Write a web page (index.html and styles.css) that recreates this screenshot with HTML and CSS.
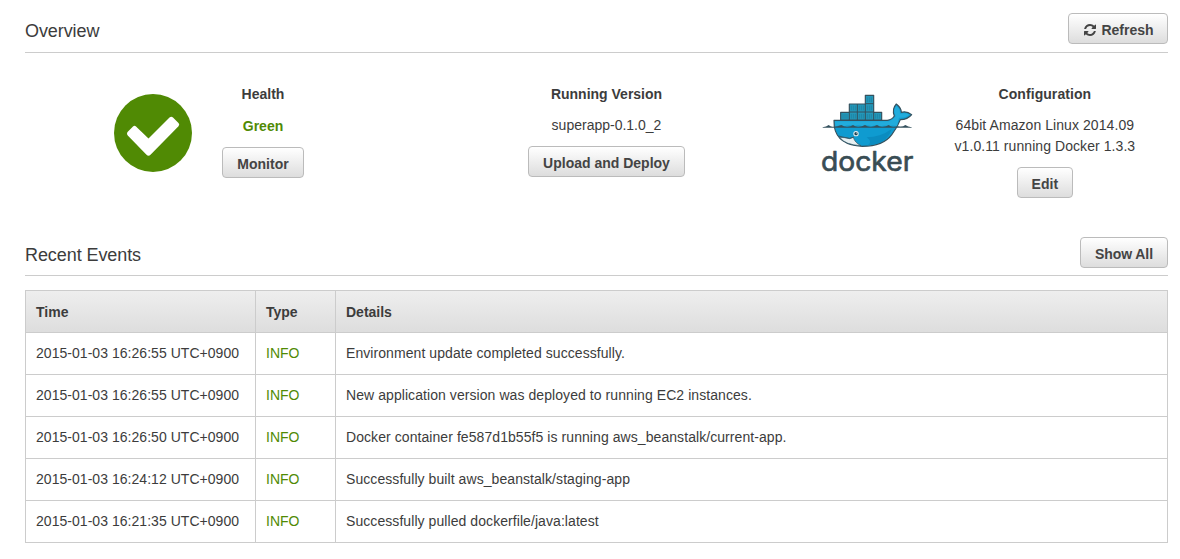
FILE: index.html
```html
<!DOCTYPE html>
<html lang="en">
<head>
<meta charset="utf-8">
<title>Environment Overview</title>
<link rel="stylesheet" href="styles.css">
</head>
<body>
<main class="page">
  <header class="section-head">
    <h2>Overview</h2>
    <button class="btn refresh" type="button"><svg class="sync" viewBox="0 0 1536 1536" aria-hidden="true"><path d="M1511 928q0 5-1 7-64 268-268 434.500T764 1536q-146 0-282.500-55T238 1324l-129 129q-19 19-45 19t-45-19-19-45V960q0-26 19-45t45-19h448q26 0 45 19t19 45-19 45l-137 137q71 66 161 102t187 36q134 0 250-65t186-179q11-17 53-117 8-23 30-23h192q13 0 22.500 9.500t9.500 22.500zM1536 128v448q0 26-19 45t-45 19h-448q-26 0-45-19t-19-45 19-45l138-138Q969 256 768 256q-134 0-250 65T332 500q-11 17-53 117-8 23-30 23H50q-13 0-22.500-9.500T18 608v-7q65-268 270-434.500T768 0q146 0 284 55.500T1297 212l130-129q19-19 45-19t45 19 19 45z"/></svg>Refresh</button>
  </header>

  <section class="summary">
    <div class="cell health">
      <svg class="check" viewBox="0 0 78 78" aria-hidden="true"><circle cx="39" cy="39" r="39"/><path d="M14 37.500L19 32.500Q20.500 31 22 32.500L34.500 44.500L55.500 23.500Q57.300 22 59 23.500L64.500 29Q66 30.500 64.500 32.200L36.500 60.800Q34.500 62.500 32.500 60.800L14 41.800Q12 39.500 14 37.500Z"/></svg>
      <div class="info">
        <h3>Health</h3>
        <p class="status">Green</p>
        <button class="btn" type="button">Monitor</button>
      </div>
    </div>
    <div class="cell version">
      <div class="info">
        <h3>Running Version</h3>
        <p>superapp-0.1.0_2</p>
        <button class="btn" type="button">Upload and Deploy</button>
      </div>
    </div>
    <div class="cell config">
      <svg class="docker" viewBox="30 21 285 249" role="img" aria-label="Docker">
        <g stroke="#34515e" stroke-width="3.500" stroke-linejoin="round">
          <path fill="#0f9bd0" d="M72 106H232Q247 104 253 93Q245 72 259 57Q274 69 274 82Q290 77 305 89Q293 104 271 104Q262 128 246 148Q220 184 157 184Q83 181 73 126Z"/>
          <path fill="#22acdc" stroke="none" d="M75 109H237Q250 104 257 94Q248 74 259 63Q271 71 270 86Q287 82 298 89Q287 99 267 98L261 123Q245 119 238 124Q225 119 211 124Q198 118 185 124Q171 118 158 124Q144 118 132 124Q118 118 103 124Q90 119 76 124Z"/>
          <path fill="#0b8cc0" stroke="none" d="M170 157Q211 157 245 132Q231 178 171 182Q190 172 170 157Z"/>
          <path fill="#e8f0f2" stroke-width="2" d="M89 157Q103 157 119 161L130 157Q134 173 153 182Q106 180 89 157Z"/>
          <path fill="none" stroke-width="2.500" d="M86 153Q101 157 119 160L132 156"/>
          <path fill="#2398ba" d="M92 82H118V57H166V31H191V82H215V105H92Z"/>
          <path fill="none" stroke-width="3" d="M118 81H191M118 82V105M142 57V105M166 57V105M191 82V105M166 56H191"/>
        </g>
        <path class="slats" d="M99 87V101M105 87V101M111 87V101M124 87V101M130 87V101M136 87V101M148 87V101M154 87V101M160 87V101M172 87V101M178 87V101M184 87V101M197 87V101M203 87V101M209 87V101M124 62V76M130 62V76M136 62V76M148 62V76M154 62V76M160 62V76M172 62V76M178 62V76M184 62V76M172 37V51M178 37V51M184 37V51"/>
        <path class="waves" d="M38 127Q49 126 56 120Q62 126 70 125Q82 125 94 120Q103 126 113 125Q122 125 129 120Q137 126 146 125Q156 125 165 120Q173 126 183 125Q193 125 201 120Q209 126 218 125Q229 125 236 120Q243 126 251 125Q260 125 266 124Q278 126 286 120Q294 126 305 127V128H38Z"/>
        <circle cx="138" cy="146" r="8" fill="#e6eef1"/><circle cx="138" cy="146" r="5" fill="#244754"/><circle cx="140" cy="144" r="1.500" fill="#fff"/>
        <text class="wordmark" x="33" y="259" textLength="277" lengthAdjust="spacingAndGlyphs">docker</text>
      </svg>
      <div class="info">
        <h3>Configuration</h3>
        <p>64bit Amazon Linux 2014.09<br>v1.0.11 running Docker 1.3.3</p>
        <button class="btn" type="button">Edit</button>
      </div>
    </div>
  </section>

  <header class="section-head events-head">
    <h2>Recent Events</h2>
    <button class="btn show-all" type="button">Show All</button>
  </header>

  <table class="events">
    <colgroup><col class="col-time"><col class="col-type"><col></colgroup>
    <thead><tr><th>Time</th><th>Type</th><th>Details</th></tr></thead>
    <tbody>
      <tr><td>2015-01-03 16:26:55 UTC+0900</td><td class="level">INFO</td><td>Environment update completed successfully.</td></tr>
      <tr><td>2015-01-03 16:26:55 UTC+0900</td><td class="level">INFO</td><td>New application version was deployed to running EC2 instances.</td></tr>
      <tr><td>2015-01-03 16:26:50 UTC+0900</td><td class="level">INFO</td><td>Docker container fe587d1b55f5 is running aws_beanstalk/current-app.</td></tr>
      <tr><td>2015-01-03 16:24:12 UTC+0900</td><td class="level">INFO</td><td>Successfully built aws_beanstalk/staging-app</td></tr>
      <tr><td>2015-01-03 16:21:35 UTC+0900</td><td class="level">INFO</td><td>Successfully pulled dockerfile/java:latest</td></tr>
    </tbody>
  </table>
</main>
</body>
</html>
```
FILE: styles.css
```css
* { box-sizing: border-box; }
body {
  margin: 0;
  background: #fff;
  color: #3c3c3c;
  font: 14px/21px "Liberation Sans", Arial, sans-serif;
}
h2, h3, p { margin: 0; }
.page { width: 1143px; margin-left: 25px; padding-top: 13px; }

.section-head {
  display: flex;
  justify-content: space-between;
  align-items: flex-start;
  height: 40px;
  border-bottom: 1px solid #ccc;
}
.section-head h2 { padding-top: 6px; font-size: 18px; line-height: 24px; font-weight: 400; letter-spacing: -0.08px; }
.events-head { height: 39px; }

.btn {
  height: 31px;
  padding: 2px 14px 0;
  border: 1px solid #bbb;
  border-radius: 4px;
  background: linear-gradient(#fff, #ddd);
  color: #444;
  font: bold 14px/20px "Liberation Sans", Arial, sans-serif;
  white-space: nowrap;
}
.refresh { width: 100px; padding-left: 15px; padding-right: 13px; }
.show-all { width: 88px; padding-left: 13px; padding-right: 13px; letter-spacing: -0.08px; }
.sync { width: 12px; height: 12px; margin-right: 5px; vertical-align: -1px; fill: #444; }

.summary { display: grid; grid-template-columns: repeat(3, 381px); height: 184px; padding-top: 31px; }
.cell { display: flex; align-items: flex-start; }
.info { text-align: center; }
.info h3 { margin-bottom: 10px; font-size: 14px; line-height: 21px; }
.info p { margin-bottom: 10px; }
.info .status { padding-top: 1px; color: #508a04; font-weight: bold; }
.health { padding-left: 88.5px; }
.health .info { margin-left: 30.5px; }
.health .btn { width: 82px; }
.check { width: 78px; height: 78px; margin-top: 10px; fill: #508a04; }
.check path { fill: #fff; }
.version { justify-content: center; padding-left: 20px; }
.config { padding-left: 33px; }
.config .info { margin-left: 39.5px; letter-spacing: 0.07px; }
.config .btn { width: 56px; padding: 2px 0 0; }
.docker { width: 95px; height: 83px; margin-top: 8px; overflow: visible; }
.slats { fill: none; stroke: #1d7593; stroke-width: 1.5; }
.waves { fill: #34515e; }
.wordmark { font: 82px Inter, sans-serif; fill: #394d54; stroke: #394d54; stroke-width: 2; stroke-linejoin: round; }

.events { width: 1143px; margin-top: 14px; border-collapse: collapse; table-layout: fixed; }
.col-time { width: 230px; }
.col-type { width: 80px; }
.events th, .events td { height: 42px; padding: 0 10px; border: 1px solid #ccc; text-align: left; }
.events th { padding-top: 2px; }
.events td { letter-spacing: 0.07px; }
.events td:first-child { letter-spacing: 0.04px; }
.events thead { background: linear-gradient(#eee, #ddd); }
.events .level { color: #508a04; letter-spacing: 0; }
```
